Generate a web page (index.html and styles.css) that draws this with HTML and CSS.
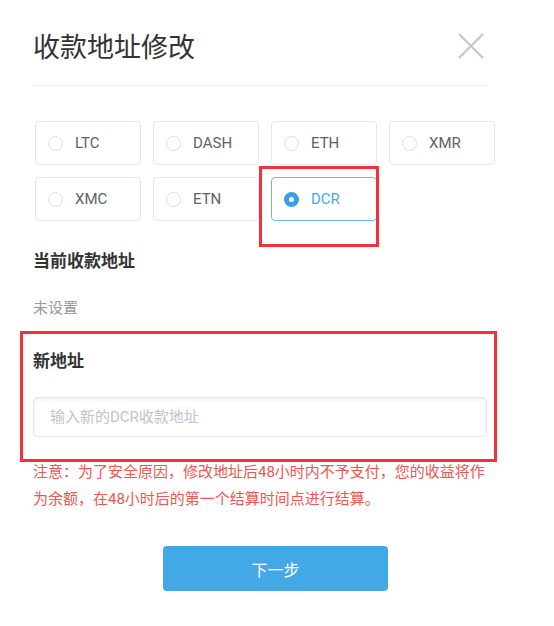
FILE: index.html
```html
<!DOCTYPE html>
<html lang="zh-CN">
<head>
  <meta charset="UTF-8" />
  <meta name="viewport" content="width=device-width, initial-scale=1.0"/>
  <title>收款地址修改</title>
  <link rel="stylesheet" href="styles.css">
</head>
<body>
  <div class="dialog">
    <div class="dialog-header">
      <h2>收款地址修改</h2>
      <span class="close">
        <svg width="26" height="26" viewBox="0 0 26 26">
          <path d="M1 1 L25 25 M25 1 L1 25" stroke="#c9c9c9" stroke-width="2.4" fill="none"/>
        </svg>
      </span>
    </div>

    <div class="coins">
      <label class="coin"><span class="radio"></span>LTC</label>
      <label class="coin"><span class="radio"></span>DASH</label>
      <label class="coin"><span class="radio"></span>ETH</label>
      <label class="coin"><span class="radio"></span>XMR</label>
      <label class="coin"><span class="radio"></span>XMC</label>
      <label class="coin"><span class="radio"></span>ETN</label>
      <label class="coin checked"><span class="radio"></span>DCR<span class="mark mark-coin"></span></label>
    </div>

    <h4 class="label">当前收款地址</h4>
    <p class="current">未设置</p>

    <div class="new-addr">
      <h4 class="label">新地址</h4>
      <input type="text" placeholder="输入新的DCR收款地址">
      <span class="mark mark-addr"></span>
    </div>

    <p class="notice">注意：为了安全原因，修改地址后48小时内不予支付，您的收益将作为余额，在48小时后的第一个结算时间点进行结算。</p>

    <div class="footer">
      <button>下一步</button>
    </div>
  </div>
</body>
</html>
```

FILE: styles.css
```css
body {
  margin: 0;
  background-color: #ffffff;
  font-family: Roboto, "Noto Sans CJK SC", sans-serif;
  color: #333;
}

.dialog {
  width: 454px;
  padding: 28px 0 0 33px;
}

.dialog-header {
  display: flex;
  justify-content: space-between;
  align-items: center;
  height: 36px;
  padding-bottom: 21px;
  border-bottom: 1px solid #ececec;
}

.dialog-header h2 {
  margin: 0;
  font-size: 27px;
  font-weight: normal;
  line-height: 36px;
  color: #333;
  font-family: "Noto Sans CJK SC", sans-serif;
}

.close {
  display: flex;
  margin-right: 3px;
}

.coins {
  display: grid;
  grid-template-columns: repeat(4, 106px);
  grid-auto-rows: 44px;
  gap: 12px;
  margin: 35px 0 0 2px;
}

.coin {
  position: relative;
  display: flex;
  align-items: center;
  gap: 12px;
  padding-left: 12px;
  border: 1px solid #e4e7ed;
  border-radius: 4px;
  font-size: 15px;
  color: #606266;
}

.radio {
  width: 13px;
  height: 13px;
  border: 1px solid #dcdfe6;
  border-radius: 50%;
  box-sizing: content-box;
}

.coin.checked {
  border-color: #6ab8ee;
  color: #48a7e8;
}

.coin.checked .radio {
  width: 5px;
  height: 5px;
  border: 5px solid #3c9fe6;
  background-color: #fff;
}

.mark {
  position: absolute;
  border: 3px solid #f2323a;
  pointer-events: none;
}

.mark-coin {
  left: -13px;
  right: -3px;
  top: -12px;
  bottom: -27px;
}

.label {
  margin: 27px 0 0;
  font-size: 17px;
  font-weight: bold;
  line-height: 24px;
  color: #333;
  font-family: "Noto Sans CJK SC", sans-serif;
}

.current {
  margin: 25px 0 0;
  font-size: 15px;
  line-height: 22px;
  color: #999;
}

.new-addr {
  position: relative;
  margin-top: 29px;
}

.new-addr .label {
  margin: 0;
}

.new-addr input {
  display: block;
  box-sizing: border-box;
  width: 100%;
  height: 40px;
  margin-top: 25px;
  padding: 0 16px;
  border: 1px solid #e4e7ed;
  border-radius: 4px;
  box-shadow: inset 0 2px 3px rgba(0, 0, 0, 0.06);
  font-family: Roboto, "Noto Sans CJK SC", sans-serif;
  font-size: 15px;
  color: #333;
}

.new-addr input::placeholder {
  color: #c0c4cc;
}

.mark-addr {
  left: -13px;
  right: -10px;
  top: -17px;
  bottom: -25px;
}

.notice {
  margin: 22px 0 0;
  font-size: 15px;
  line-height: 27px;
  color: #f2554f;
}

.footer {
  margin-top: 33px;
  padding-left: 130px;
}

.footer button {
  width: 225px;
  height: 45px;
  border: none;
  border-radius: 4px;
  background-color: #43a9e6;
  color: #fff;
  font-size: 16px;
  font-family: "Noto Sans CJK SC", sans-serif;
  cursor: pointer;
}
```
